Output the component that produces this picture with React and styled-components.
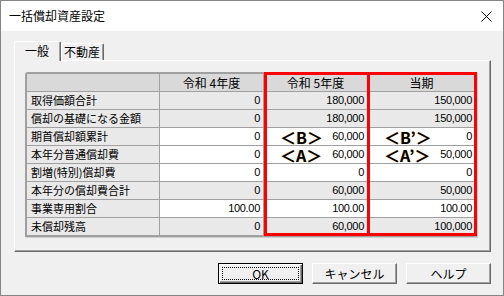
import React from "react"
import styled, { createGlobalStyle } from "styled-components"

const GlobalStyle = createGlobalStyle`
  html, body {
    margin: 0;
    padding: 0;
    background: #f0f0f0;
  }
  body {
    font-family: "Noto Sans CJK JP", "Liberation Sans", sans-serif;
    color: #000;
  }
`

const columns = ["", "令和 4年度", "令和 5年度", "当期"]

const rows = [
  { label: "取得価額合計", values: ["0", "180,000", "150,000"], white: false },
  { label: "償却の基礎になる金額", values: ["0", "180,000", "150,000"], white: false },
  { label: "期首償却額累計", values: ["0", "60,000", "0"], white: true, tags: ["＜B＞", "＜B’＞"] },
  { label: "本年分普通償却費", values: ["0", "60,000", "50,000"], white: true, tags: ["＜A＞", "＜A’＞"] },
  { label: "割増(特別)償却費", values: ["0", "0", "0"], white: true },
  { label: "本年分の償却費合計", values: ["0", "60,000", "50,000"], white: false },
  { label: "事業専用割合", values: ["100.00", "100.00", "100.00"], white: true },
  { label: "未償却残高", values: ["0", "60,000", "100,000"], white: false },
]

export default function App() {
  return (
    <>
      <GlobalStyle />
      <Window>
        <TitleBar>
          <Title>一括償却資産設定</Title>
          <Close>
            <svg width="11" height="11" viewBox="0 0 11 11">
              <path d="M0.5 0.5 L10.5 10.5 M10.5 0.5 L0.5 10.5" stroke="#000" strokeWidth="1" />
            </svg>
          </Close>
        </TitleBar>
        <Body>
          <TabStrip>
            <Tab $active>一般</Tab>
            <Tab>不動産</Tab>
          </TabStrip>
          <Panel>
            <GridWrap>
              <Grid>
                {columns.map((c, i) => (
                  <HeadCell key={i}>{c}</HeadCell>
                ))}
                {rows.map((r, ri) => (
                  <React.Fragment key={ri}>
                    <LabelCell $last={ri === rows.length - 1}>{r.label}</LabelCell>
                    {r.values.map((v, vi) => (
                      <ValueCell key={vi} $white={r.white} $last={ri === rows.length - 1}>
                        {r.tags && vi > 0 && <Tag>{r.tags[vi - 1]}</Tag>}
                        {v}
                      </ValueCell>
                    ))}
                  </React.Fragment>
                ))}
              </Grid>
              <Mark $left={239} $width={106} />
              <Mark $left={342} $width={110} />
            </GridWrap>
          </Panel>
          <Footer>
            <Button $default>
              <Focus>OK</Focus>
            </Button>
            <Button>キャンセル</Button>
            <Button>ヘルプ</Button>
          </Footer>
        </Body>
      </Window>
    </>
  )
}

const Window = styled.div`
  width: 504px;
  height: 296px;
  box-sizing: border-box;
  border: 1px solid #858585;
  background: #f0f0f0;
  display: flex;
  flex-direction: column;
`
const TitleBar = styled.div`
  height: 30px;
  background: #fff;
  display: flex;
  align-items: center;
  justify-content: space-between;
  padding: 0 11px 0 8px;
`
const Title = styled.div`
  font-size: 12px;
  line-height: 12px;
`
const Close = styled.div`
  display: flex;
  align-items: center;
`
const Body = styled.div`
  flex: 1;
  display: flex;
  flex-direction: column;
  padding: 11px 12px 0 13px;
`
const TabStrip = styled.div`
  display: flex;
  align-items: flex-end;
  height: 19px;
  position: relative;
  z-index: 1;
  margin-bottom: -1px;
`
const Tab = styled.div`
  box-sizing: border-box;
  flex: none;
  height: ${(p) => (p.$active ? 20 : 17)}px;
  padding: ${(p) => (p.$active ? "2px 11px 0 10px" : "1px 3px 0 2px")};
  margin-bottom: ${(p) => (p.$active ? 0 : 1)}px;
  font-size: 12px;
  line-height: 14px;
  text-align: center;
  background: #f0f0f0;
  border-top: 1px solid #fff;
  border-left: 1px solid #fff;
  border-right: 1px solid #696969;
  box-shadow: inset -1px 0 0 #a0a0a0;
  border-radius: 2px 2px 0 0;
`
const Panel = styled.div`
  box-sizing: border-box;
  height: 192px;
  border-top: 1px solid #fff;
  border-left: 1px solid #fff;
  border-right: 1px solid #696969;
  border-bottom: 1px solid #696969;
  box-shadow: inset -1px -1px 0 #a0a0a0;
  padding: 11px 13px 0 10px;
`
const GridWrap = styled.div`
  position: relative;
`
const Grid = styled.div`
  display: grid;
  grid-template-columns: 133px 104px 104px 107px;
  border: 2px solid #a0a0a0;
  border-radius: 3px 3px 0 0;
  box-shadow: 1px 1px 0 #cfcfcf;
  background: #a0a0a0;
  width: 448px;
`
const Cell = styled.div`
  box-sizing: border-box;
  height: 18px;
  border-bottom: 1px solid #a0a0a0;
  border-right: 1px solid #a0a0a0;
  font-size: 11px;
  line-height: 17px;
  white-space: nowrap;
  position: relative;
  &:nth-child(4n) {
    border-right: none;
  }
`
const HeadCell = styled(Cell)`
  background: #d9d9d9;
  text-align: center;
  font-size: 12px;
`
const LabelCell = styled(Cell)`
  background: #e9e9e9;
  padding-left: 4px;
  font-size: 11px;
  height: ${(p) => (p.$last ? 17 : 18)}px;
  border-bottom: ${(p) => (p.$last ? "none" : "1px solid #a0a0a0")};
`
const ValueCell = styled(Cell)`
  background: ${(p) => (p.$white ? "#ffffff" : "#e9e9e9")};
  text-align: right;
  padding-right: 3px;
  font-family: "Liberation Sans", sans-serif;
  font-size: 11px;
  letter-spacing: -0.3px;
  height: ${(p) => (p.$last ? 17 : 18)}px;
  border-bottom: ${(p) => (p.$last ? "none" : "1px solid #a0a0a0")};
`
const Tag = styled.span`
  position: absolute;
  left: 16px;
  top: 3px;
  font-family: "Noto Sans CJK JP", sans-serif;
  font-weight: 700;
  font-size: 16px;
  line-height: 12px;
  letter-spacing: 0;
  color: #000;
  text-shadow: 0 0 1px #f0b050;
`
const Mark = styled.div`
  position: absolute;
  top: 0;
  left: ${(p) => p.$left}px;
  width: ${(p) => p.$width}px;
  height: 164px;
  box-sizing: border-box;
  border: 3px solid #ff0000;
  pointer-events: none;
`
const Footer = styled.div`
  display: flex;
  justify-content: flex-end;
  gap: 9px;
  margin-top: 11px;
`
const Button = styled.div`
  box-sizing: border-box;
  width: 85px;
  height: 21px;
  display: flex;
  align-items: center;
  justify-content: center;
  font-size: 12px;
  background: #f0f0f0;
  border-top: 1px solid ${(p) => (p.$default ? "#000" : "#fff")};
  border-left: 1px solid ${(p) => (p.$default ? "#000" : "#fff")};
  border-right: 1px solid ${(p) => (p.$default ? "#000" : "#696969")};
  border-bottom: 1px solid ${(p) => (p.$default ? "#000" : "#696969")};
  box-shadow: ${(p) =>
    p.$default
      ? "inset 1px 1px 0 #fff, inset -1px -1px 0 #696969, inset -2px -2px 0 #a0a0a0"
      : "inset -1px -1px 0 #a0a0a0"};
`
const Focus = styled.div`
  box-sizing: border-box;
  width: 77px;
  height: 13px;
  border: 1px dotted #000;
  display: flex;
  align-items: center;
  justify-content: center;
  line-height: 11px;
`
